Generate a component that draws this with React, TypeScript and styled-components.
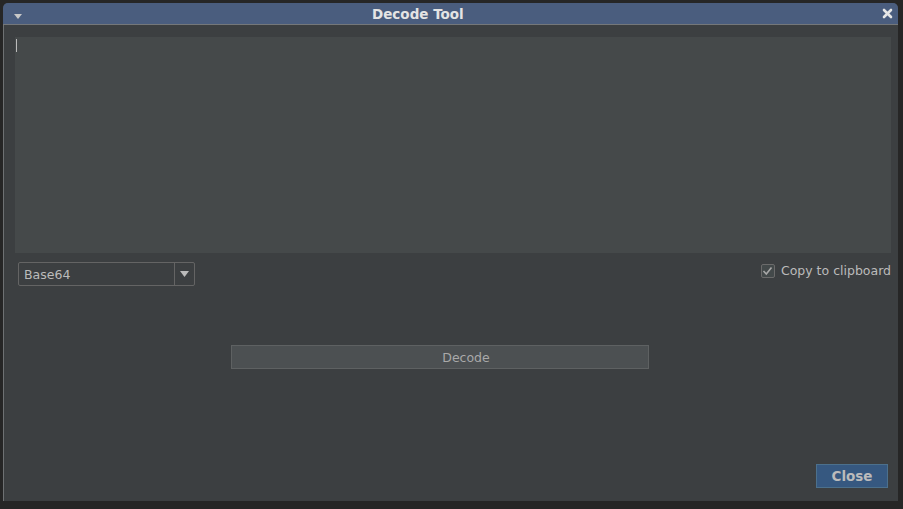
import React from 'react';
import styled, { createGlobalStyle } from 'styled-components';

const GlobalStyle = createGlobalStyle`
  html, body {
    margin: 0;
    padding: 0;
    background: #262626;
    overflow: hidden;
  }
  body {
    font-family: 'DejaVu Sans', 'Liberation Sans', sans-serif;
  }
`;

export default function App() {
  return (
    <>
      <GlobalStyle />
      <Screen>
        <Window>
          <TitleBar>
            <MenuArrow />
            <Title>Decode Tool</Title>
            <CloseX aria-label="close">
              <svg width="11" height="11" viewBox="0 0 11 11">
                <path
                  d="M2 2 L9 9 M9 2 L2 9"
                  stroke="#e6e6e6"
                  strokeWidth="2.6"
                  strokeLinecap="round"
                />
              </svg>
            </CloseX>
          </TitleBar>
          <Content>
            <TextArea>
              <Caret />
            </TextArea>
            <OptionsRow>
              <Combo>
                <ComboValue>Base64</ComboValue>
                <ComboArrow>
                  <svg width="9" height="6" viewBox="0 0 9 6">
                    <path d="M0 0 L9 0 L4.5 6 Z" fill="#bbbbbb" />
                  </svg>
                </ComboArrow>
              </Combo>
              <CheckLabel>
                <CheckBox>
                  <svg width="11" height="10" viewBox="0 0 11 10">
                    <path
                      d="M1.5 5 L4.3 8 L9.5 1.5"
                      stroke="#a8a8a8"
                      strokeWidth="1.6"
                      fill="none"
                    />
                  </svg>
                </CheckBox>
                Copy to clipboard
              </CheckLabel>
            </OptionsRow>
            <DecodeRow>
              <DecodeButton>Decode</DecodeButton>
            </DecodeRow>
            <Footer>
              <CloseButton>Close</CloseButton>
            </Footer>
          </Content>
        </Window>
      </Screen>
    </>
  );
}

const Screen = styled.div`
  width: 903px;
  height: 509px;
  padding: 3px 0 0 3px;
  box-sizing: border-box;
`;

const Window = styled.div`
  width: 895px;
  height: 498px;
  display: flex;
  flex-direction: column;
  background: #3c3f41;
  border-radius: 5px 5px 0 0;
  overflow: hidden;
`;

const TitleBar = styled.div`
  height: 21px;
  flex: none;
  display: flex;
  align-items: center;
  background: #4a5d7e;
  border-bottom: 1px solid #74777a;
`;

const MenuArrow = styled.div`
  width: 0;
  height: 0;
  margin-left: 11px;
  margin-top: 5px;
  border-left: 4px solid transparent;
  border-right: 4px solid transparent;
  border-top: 5px solid #c8c8c8;
`;

const Title = styled.div`
  margin-left: 350px;
  font-size: 13.5px;
  font-weight: bold;
  color: #e4e4e4;
`;

const CloseX = styled.div`
  margin-left: auto;
  margin-right: 5px;
  display: flex;
`;

const Content = styled.div`
  flex: 1;
  display: flex;
  flex-direction: column;
  border-left: 1px solid #6e7173;
  padding: 12px 7px 13px 11px;
`;

const TextArea = styled.div`
  height: 216px;
  background: #45494a;
  padding: 2px 1px;
  box-sizing: border-box;
`;

const Caret = styled.div`
  width: 1px;
  height: 13px;
  background: #bbbbbb;
`;

const OptionsRow = styled.div`
  margin-top: 9px;
  display: flex;
  justify-content: space-between;
  align-items: flex-start;
`;

const Combo = styled.div`
  margin-left: 3px;
  width: 177px;
  height: 24px;
  box-sizing: border-box;
  border: 1px solid #646464;
  border-radius: 2px;
  display: flex;
`;

const ComboValue = styled.div`
  flex: 1;
  padding-left: 5px;
  display: flex;
  align-items: center;
  font-size: 12.5px;
  color: #bbbbbb;
`;

const ComboArrow = styled.div`
  width: 19px;
  border-left: 1px solid #646464;
  display: flex;
  align-items: center;
  justify-content: center;
`;

const CheckLabel = styled.div`
  display: flex;
  align-items: center;
  gap: 6px;
  margin-top: 1px;
  font-size: 12.5px;
  color: #bbbbbb;
`;

const CheckBox = styled.div`
  width: 12px;
  height: 12px;
  border: 1px solid #6b6b6b;
  border-radius: 2px;
  background: #43494a;
  display: flex;
  align-items: center;
  justify-content: center;
`;

const DecodeRow = styled.div`
  margin-top: 59px;
  padding-left: 216px;
  display: flex;
`;

const DecodeButton = styled.div`
  width: 418px;
  height: 24px;
  box-sizing: border-box;
  padding-left: 52px;
  background: #4c5052;
  border: 1px solid #5e6162;
  display: flex;
  align-items: center;
  justify-content: center;
  font-size: 12.5px;
  color: #a9a9a9;
`;

const Footer = styled.div`
  margin-top: auto;
  display: flex;
  justify-content: flex-end;
  padding-right: 3px;
`;

const CloseButton = styled.div`
  width: 72px;
  height: 24px;
  box-sizing: border-box;
  background: #365880;
  border: 1px solid #4c708c;
  display: flex;
  align-items: center;
  justify-content: center;
  font-size: 13.5px;
  font-weight: bold;
  color: #bbbbbb;
`;
